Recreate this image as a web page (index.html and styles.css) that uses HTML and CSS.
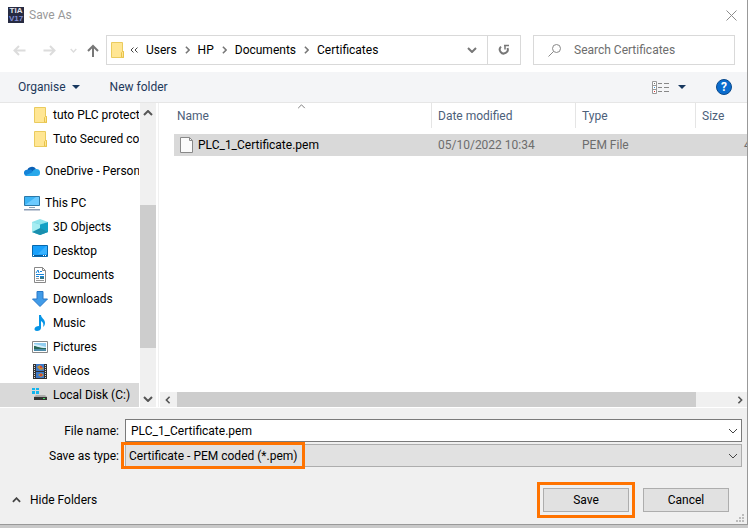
FILE: index.html
```html
<!DOCTYPE html>
<html lang="en">
<head>
<meta charset="utf-8">
<title>Save As</title>
<link rel="stylesheet" href="styles.css">
</head>
<body>
<svg class="defs" aria-hidden="true">
  <symbol id="folder" viewBox="0 0 13 16">
    <path d="M.5 .5h11v9h1v6H.5z" fill="#ffe694" stroke="#eacb5e"/>
    <path d="M10.500 15V10.500l1-1h1v6z" fill="#ffe694" stroke="#e8c34a"/>
  </symbol>
  <symbol id="chev-down" viewBox="0 0 10 6"><path d="M1 1l4 4 4-4" fill="none" stroke="currentColor"/></symbol>
  <symbol id="chev-up" viewBox="0 0 10 6"><path d="M1 5l4-4 4 4" fill="none" stroke="currentColor"/></symbol>
  <symbol id="chev-right" viewBox="0 0 6 10"><path d="M1 1l4 4-4 4" fill="none" stroke="currentColor"/></symbol>
  <symbol id="chev-left" viewBox="0 0 6 10"><path d="M5 1l-4 4 4 4" fill="none" stroke="currentColor"/></symbol>
  <symbol id="triangle" viewBox="0 0 8 4"><path d="M0 0h8L4 4z" fill="#17375e"/></symbol>
</svg>

<main class="dialog">
  <header class="titlebar">
    <span class="app-icon"><span>TIA</span><span>V17</span></span>
    <h1>Save As</h1>
    <button class="close" aria-label="Close"><svg width="11" height="11" viewBox="0 0 11 11"><path d="M.5 .5l10 10M10.500 .5l-10 10" stroke="#8c8c8c"/></svg></button>
  </header>

  <nav class="navbar">
    <div class="history">
      <button aria-label="Back"><svg width="13" height="11" viewBox="0 0 13 11"><path d="M12.500 5.500H1.500M6 1L1.500 5.500 6 10" fill="none" stroke="#dcdcdc" stroke-width="2"/></svg></button>
      <button aria-label="Forward"><svg width="13" height="11" viewBox="0 0 13 11"><path d="M.5 5.500h11M7 1l4.500 4.500L7 10" fill="none" stroke="#dcdcdc" stroke-width="2"/></svg></button>
      <button class="recent" aria-label="Recent locations"><svg width="7" height="5" viewBox="0 0 10 6"><path d="M1 1l4 4 4-4" fill="none" stroke="#dcdcdc" stroke-width="2"/></svg></button>
      <button class="up" aria-label="Up"><svg width="12" height="13" viewBox="0 0 12 13"><path d="M6 13V2M1 7l5-5 5 5" fill="none" stroke="#777" stroke-width="2"/></svg></button>
    </div>
    <div class="address">
      <svg class="ico-folder" width="13" height="16"><use href="#folder"/></svg>
      <svg class="more" width="8" height="6" viewBox="0 0 8 6"><path d="M3.500 .5L1 3l2.500 2.500M7.500 .5L5 3l2.500 2.500" fill="none" stroke="#444"/></svg>
      <a href="#">Users</a>
      <svg class="sep" width="5" height="8"><use href="#chev-right"/></svg>
      <a href="#">HP</a>
      <svg class="sep" width="5" height="8"><use href="#chev-right"/></svg>
      <a href="#">Documents</a>
      <svg class="sep" width="5" height="8"><use href="#chev-right"/></svg>
      <a href="#">Certificates</a>
      <button class="history-drop" aria-label="Previous locations"><svg width="10" height="6"><use href="#chev-down"/></svg></button>
      <button class="refresh" aria-label="Refresh"><svg width="12" height="12" viewBox="0 0 12 12"><path d="M3 2.600A4 4 0 1 0 9.500 4" fill="none" stroke="#777" stroke-width="2"/><path d="M6 1.500h5M7 1v4.500" fill="none" stroke="#777" stroke-width="1.500"/></svg></button>
    </div>
    <label class="search">
      <svg width="14" height="13" viewBox="0 0 14 13"><circle cx="8.500" cy="4.500" r="4" fill="none" stroke="#888"/><path d="M5.500 7.500L.5 12.500" stroke="#888"/></svg>
      <input type="text" placeholder="Search Certificates" aria-label="Search Certificates">
    </label>
  </nav>

  <div class="toolbar">
    <button>Organise <svg width="8" height="4"><use href="#triangle"/></svg></button>
    <button>New folder</button>
    <button class="view" aria-label="Change your view">
      <svg width="17" height="13" viewBox="0 0 17 13"><path d="M.5 .5h4v12h-4zM.5 4.500h4M.5 8.500h4" fill="#fff" stroke="#999"/><path d="M6 2.500h4M12 2.500h5M6 6.500h4M12 6.500h5M6 10.500h4M12 10.500h5" stroke="#888"/><path d="M2 2h1v1H2z" fill="#777"/><path d="M2 6h1v1H2z" fill="#2f8fd0"/><path d="M2 10h1v1H2z" fill="#d33"/></svg>
      <svg width="8" height="4"><use href="#triangle"/></svg>
    </button>
    <button class="help" aria-label="Help">?</button>
  </div>

  <section class="browser">
    <ul class="tree">
      <li class="child"><svg width="16" height="16" viewBox="0 0 16 16"><use href="#folder" x="2" width="13" height="16"/></svg>tuto PLC protect</li>
      <li class="child"><svg width="16" height="16" viewBox="0 0 16 16"><use href="#folder" x="2" width="13" height="16"/></svg>Tuto Secured co</li>
      <li class="root"><svg width="16" height="16" viewBox="0 0 16 16"><path d="M3 8a5 5 0 0 1 9-2l-4 6H2z" fill="#0a5fb5"/><path d="M0 10.500A3 3 0 0 1 4 7l3-.5 6 6.500H3a3 3 0 0 1-3-2.500z" fill="#1483d8"/><path d="M2 12l6-2.500A5 5 0 0 1 12.500 6 3.700 3.700 0 0 1 16 10a3 3 0 0 1-3 3H3z" fill="#28a8ea"/></svg>OneDrive - Person</li>
      <li class="root"><svg width="16" height="16" viewBox="0 0 16 16"><path d="M.5 1.500h15v9H.5z" fill="#3cb4f5" stroke="#2c78a8"/><path d="M1 10L12 2h3v8z" fill="#6ccaff"/><path d="M5 12h6v1H5z" fill="#8ca0b4"/><path d="M0 14h16v1.500H0z" fill="#8d9db5"/></svg>This PC</li>
      <li class="child"><svg width="16" height="16" viewBox="0 0 16 16"><path d="M0 3l8-3 8 3-8 3z" fill="#8fe4ec"/><path d="M0 3l8 2.500V16l-8-3z" fill="#4cc0d0"/><path d="M16 3L8 5.500V16l8-3z" fill="#14a0c4"/><path d="M0 13l8-4 8 4-8 3z" fill="#1a8fae"/><path d="M0 3l8 2.500V9l-8 4z" fill="#a6edf2"/></svg>3D Objects</li>
      <li class="child"><svg width="16" height="16" viewBox="0 0 16 16"><path d="M.5 2.500h15v11H.5z" fill="#18a0fb" stroke="#0668ae"/><path d="M1 12h14v1H1z" fill="#085a99"/><path d="M1 12h1v1H1zM11 12h1v1h-1zM13 12h1v1h-1z" fill="#fff"/><path d="M6 11l8-8h1v8z" fill="#38b2ff"/></svg>Desktop</li>
      <li class="child"><svg width="16" height="16" viewBox="0 0 16 16"><path d="M2.500 .5h8l3 3v12h-11z" fill="#fff" stroke="#888"/><path d="M10.500 .5v3h3" fill="none" stroke="#888"/><path d="M4 6l2-3 1 3M8 4.500h2M4 7.500h8M4 9.500h3M8 9.500h4" fill="none" stroke="#1683d8"/><path d="M8 10h4v2H8z" fill="#357b8d"/><path d="M4 11.500h3M4 13.500h8" stroke="#999"/></svg>Documents</li>
      <li class="child"><svg width="16" height="16" viewBox="0 0 16 16"><path d="M5 .5h6v7.500h4.500L8 15.500 .5 8H5z" fill="#409be8" stroke="#2878c8"/></svg>Downloads</li>
      <li class="child"><svg width="16" height="16" viewBox="0 0 16 16"><path d="M7 0h2c0 3 4 4 4 8 0 2-1 3-2 4 1-3 0-5-2-6v7c0 2-2 3-4 3-4 0-3-5 2-5z" fill="#0795e6"/></svg>Music</li>
      <li class="child"><svg width="16" height="16" viewBox="0 0 16 16"><path d="M.5 2.500h15v11H.5z" fill="#fff" stroke="#888"/><path d="M2 4h12v8H2z" fill="#91cdf0"/><path d="M2 5l5 1 7 2v1H2z" fill="#d6effa"/><path d="M2 7c3 0 4 2 12 2v1H2z" fill="#286858"/><path d="M2 10h12v2H2z" fill="#4e8caa"/></svg>Pictures</li>
      <li class="child"><svg width="16" height="16" viewBox="0 0 16 16"><path d="M1 1h14v15H1z" fill="#333"/><path d="M4 1h8v7H4zM4 9h8v6H4z" fill="#3d79c8"/><path d="M5 4l3-2 4 4-4 1zM6 12l3-2 3 2-3 2z" fill="#c58b34"/><path d="M8 3h2v2H8zM8 11h2v2H8z" fill="#d04734"/><path d="M2.500 2v14M13.500 2v14" stroke="#ddd" stroke-dasharray="1 1"/></svg>Videos</li>
      <li class="child selected"><svg width="16" height="16" viewBox="0 0 16 16"><path d="M0 1h3v2H0zM4 1h3v2H4zM0 4h3v3H0zM4 4h3v3H4z" fill="#12b5ee"/><path d="M4 8h9l2 2H2z" fill="#aaa"/><path d="M2 10h13v3H2z" fill="#333"/><path d="M11 11h2v1h-2z" fill="#40e060"/></svg>Local Disk (C:)</li>
    </ul>
    <div class="vscroll">
      <svg width="10" height="6"><use href="#chev-up"/></svg>
      <div class="thumb"></div>
      <svg width="10" height="6"><use href="#chev-down"/></svg>
    </div>
    <div class="files">
      <div class="listing">
        <table>
          <colgroup><col class="c-name"><col class="c-date"><col class="c-type"><col></colgroup>
          <thead><tr>
            <th>Name<svg class="sort" width="9" height="5" viewBox="0 0 10 6"><use href="#chev-up" width="10" height="6"/></svg></th>
            <th>Date modified</th><th>Type</th><th>Size</th>
          </tr></thead>
          <tbody><tr>
            <td><span class="filename"><svg width="13" height="16" viewBox="0 0 13 16"><path d="M.5 .5h9l3 3v12H.5z" fill="#fafafa" stroke="#888"/><path d="M9.500 .5v3h3" fill="none" stroke="#888"/></svg>PLC_1_Certificate.pem</span></td>
            <td>05/10/2022 10:34</td><td>PEM File</td><td class="size">4 KB</td>
          </tr></tbody>
        </table>
      </div>
      <div class="hscroll">
        <svg width="6" height="8"><use href="#chev-left"/></svg>
        <div class="thumb"></div>
        <svg width="6" height="8"><use href="#chev-right"/></svg>
      </div>
    </div>
  </section>

  <form class="footer">
    <div class="fields">
      <label for="name">File name:</label>
      <div class="field"><input id="name" type="text" value="PLC_1_Certificate.pem"><svg width="10" height="6"><use href="#chev-down"/></svg></div>
      <label for="type">Save as type:</label>
      <div class="field"><select id="type"><option>Certificate - PEM coded (*.pem)</option></select><svg width="10" height="6"><use href="#chev-down"/></svg><span class="mark mark-type"></span></div>
    </div>
    <div class="actions">
      <button type="button" class="hide"><svg width="9" height="6"><use href="#chev-up"/></svg>Hide Folders</button>
      <span class="save"><button type="button" class="push">Save</button><span class="mark mark-save"></span></span>
      <button type="button" class="push">Cancel</button>
    </div>
    <svg class="grip" width="8" height="8" viewBox="0 0 8 8"><path d="M6 0h2v2H6zM3 3h2v2H3zM6 3h2v2H6zM0 6h2v2H0zM3 6h2v2H3zM6 6h2v2H6z" fill="#bcbcbc"/></svg>
  </form>
</main>
</body>
</html>
```
FILE: styles.css
```css
* { box-sizing: border-box; }

body {
  margin: 0;
  min-height: 100vh;
  padding-bottom: 3px;
  display: flex;
  background: #c9c9c9;
  color: #000;
  font: 12px/16px Roboto, "Open Sans", sans-serif;
}

button, input, select { font: inherit; color: inherit; }
button { border: 0; padding: 0; background: none; }
svg { display: block; flex: none; }
.defs { position: absolute; width: 0; height: 0; }

.dialog {
  flex: 1;
  min-width: 0;
  display: flex;
  flex-direction: column;
  background: #fff;
  border-right: 1px solid #999;
  border-bottom: 1px solid #999;
}

.titlebar {
  height: 30px;
  display: flex;
  align-items: center;
  gap: 5px;
  padding: 0 10px 0 8px;
}
.titlebar h1 { margin: 0; flex: 1; font-size: 12px; font-weight: 400; color: #999; }
.app-icon {
  width: 16px;
  height: 16px;
  overflow: hidden;
  background: #272b42;
  color: #e3e5ee;
  text-align: center;
  font: bold 8px/8px "Liberation Sans", sans-serif;
}
.app-icon span { display: block; }
.app-icon span + span { color: #8491d8; }

.navbar { display: flex; height: 42px; padding: 5px 12px 7px 13px; }
.history { display: flex; align-items: center; width: 93px; gap: 17px; }
.history .recent { margin-left: -3px; }
.history .up { margin-left: -7px; }
.address, .search { display: flex; align-items: center; border: 1px solid #d9d9d9; }
.address { flex: 1; padding-left: 4px; color: #777; }
.address a { color: #000; text-decoration: none; }
.address .more { margin: 0 8px 0 6px; }
.sep { margin: 0 8px; stroke-width: 2px; }
.history-drop { margin-left: auto; padding: 0 10px; }
.refresh { align-self: stretch; width: 33px; border-left: 1px solid #d9d9d9; display: grid; place-items: center; }
.search { width: 202px; margin-left: 12px; padding-left: 14px; gap: 12px; }
.search input { flex: 1; min-width: 0; border: 0; padding: 0; outline: 0; }
.search input::placeholder { color: #6d6d6d; opacity: 1; }

.toolbar {
  height: 31px;
  display: flex;
  align-items: center;
  gap: 30px;
  padding: 0 15px 0 18px;
  background: #f4f5f7;
  border-bottom: 1px solid #e6e6e6;
  color: #1e395b;
}
.toolbar button { display: flex; align-items: center; gap: 6px; }
.toolbar .view { margin-left: auto; gap: 9px; }
.toolbar .help {
  width: 16px;
  height: 16px;
  justify-content: center;
  border-radius: 50%;
  border: 1px solid #0b4a8c;
  background: #0a6cce;
  color: #fff;
  font-weight: 700;
}

.browser { flex: 1; display: flex; min-height: 0; padding-bottom: 1px; }
.tree { list-style: none; margin: 0; padding: 0; width: 139px; overflow: hidden; }
.tree li { height: 24px; display: flex; align-items: center; gap: 5px; white-space: nowrap; }
.tree .root { margin: 8px 0; padding-left: 24px; }
.tree .root + .root { margin-bottom: 0; }
.tree .child { padding-left: 32px; }
.tree .selected { background: #d9d9d9; }

.vscroll {
  width: 16px;
  margin-left: 1px;
  display: flex;
  flex-direction: column;
  align-items: center;
  padding: 7px 0 5px;
  background: #f0f0f0;
  color: #555;
}
.vscroll .thumb { width: 100%; height: 143px; margin: auto 0 48px; background: #cdcdcd; }
.vscroll svg, .hscroll svg, .history-drop svg, .hide svg { stroke-width: 2px; }

.files { flex: 1; min-width: 0; margin-left: 2px; border-left: 1px solid #f0f0f0; display: flex; flex-direction: column; }
.listing { flex: 1; padding-left: 15px; overflow: hidden; }
table { width: 100%; table-layout: fixed; border-collapse: separate; border-spacing: 0; }
.c-name { width: 258px; }
.c-date { width: 144px; }
.c-type { width: 120px; }
th, td { padding: 0 0 0 6px; text-align: left; font-weight: 400; white-space: nowrap; }
th:first-child, td:first-child { padding-left: 3px; }
th { position: relative; height: 25px; color: #4c607a; border-right: 1px solid #e5e5e5; }
th:last-child { border-right: 0; }
.sort { position: absolute; top: 1px; left: 48%; color: #666; }
thead::after { content: ""; display: table-row; height: 6px; }
td { height: 22px; background: #d9d9d9; color: #6d6d6d; }
td:first-child { color: #000; padding-left: 6px; }
.filename { display: flex; align-items: center; gap: 5px; }
.size { padding-left: 48px; }

.hscroll { height: 15px; display: flex; align-items: center; margin-left: 1px; padding: 0 4px 0 5px; background: #f0f0f0; color: #555; }
.hscroll .thumb { width: 519px; height: 15px; margin: 0 auto 0 6px; background: #cdcdcd; }

.footer { position: relative; height: 116px; margin: 0; padding: 11px 5px 0 12px; background: #f0f0f0; }
.fields { display: grid; grid-template-columns: 107px 1fr; column-gap: 6px; row-gap: 2px; align-items: center; }
.fields label { text-align: right; }
.field { position: relative; height: 23px; color: #444; }
.field input, .field select {
  display: block;
  width: 100%;
  height: 23px;
  margin: 0;
  border: 1px solid #7a7a7a;
  border-radius: 0;
  padding: 0 24px 0 5px;
  background: #fff;
  color: #000;
  outline: 0;
}
.field select { appearance: none; padding-left: 3px; background: #e1e1e1; border-color: #adadad; }
.field svg { position: absolute; right: 4px; top: 9px; }

.mark { position: absolute; border: 3px solid #ff7300; pointer-events: none; }
.mark-type { left: -4px; top: -2px; width: 184px; height: 27px; }
.mark-save { inset: -6px; }

.actions { display: flex; align-items: center; gap: 14px; margin: 21px 13px 0 0; }
.hide { display: flex; align-items: center; gap: 9px; margin-right: auto; }
.hide svg { color: #444; }
.save { position: relative; }
.push { display: block; width: 86px; height: 24px; background: #e1e1e1; border: 1px solid #adadad; }
.grip { position: absolute; right: 3px; bottom: 2px; }
```
